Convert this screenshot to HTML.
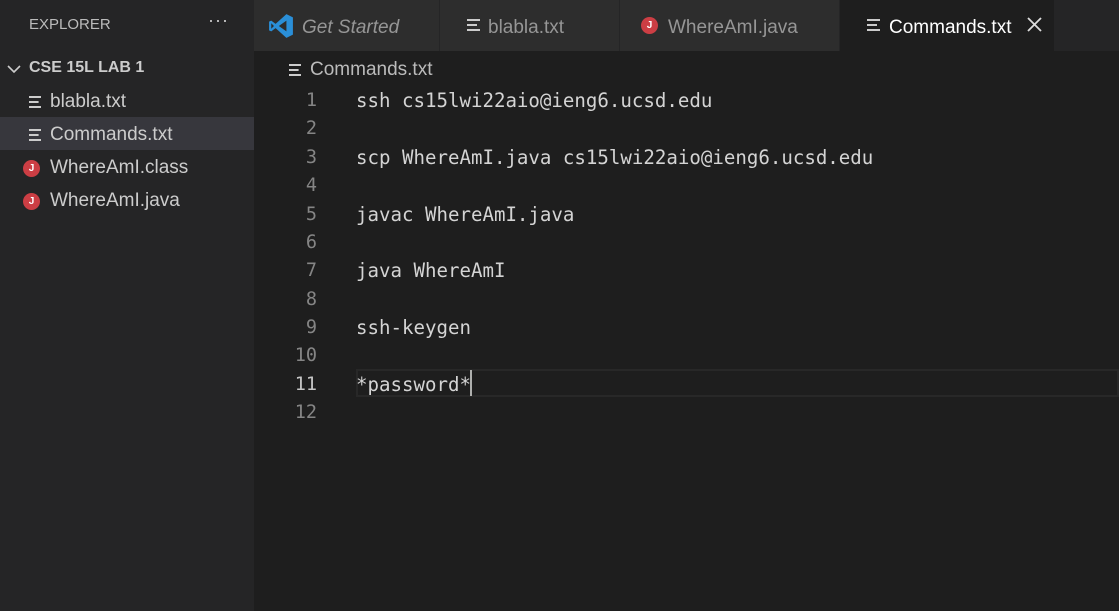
<!DOCTYPE html>
<html><head><meta charset="utf-8"><style>
*{margin:0;padding:0;box-sizing:border-box}
body{width:1119px;height:611px;background:#1e1e1e;overflow:hidden;font-family:"Liberation Sans",sans-serif;position:relative}
.side{position:absolute;left:0;top:0;width:254px;height:611px;background:#252526}
.abs{position:absolute;white-space:nowrap}
.tabbar{position:absolute;left:254px;top:0;width:865px;height:51px;background:#252526}
.tab{position:absolute;top:0;height:51px;background:#2d2d2d;border-right:1px solid #252526;color:#969696;font-size:19px;line-height:51px}
.ln{position:absolute;width:317px;text-align:right;color:#858585;font-family:"DejaVu Sans Mono","Liberation Mono",monospace;font-size:18.5px}
.code{position:absolute;left:356px;color:#d4d4d4;font-family:"DejaVu Sans Mono","Liberation Mono",monospace;font-size:19.1px;white-space:pre}
.jic{display:inline-block;width:17px;height:17px;border-radius:50%;background:#cc3e44;color:#fff;font-size:10px;line-height:17px;text-align:center;font-weight:bold;vertical-align:2px;margin-right:5px}
.txtic{display:inline-block;width:13px;height:12px;vertical-align:middle;margin-right:6px;background:linear-gradient(90deg,#ccc 0 100%) 0 0/100% 2px no-repeat,linear-gradient(90deg,#ccc 0 100%) 0 5px/80% 2px no-repeat,linear-gradient(90deg,#ccc 0 100%) 0 10px/100% 2px no-repeat}
</style></head><body>
<div class="side"></div>
<div class="abs" style="left:29px;top:16px;color:#bbb;font-size:15px">EXPLORER</div>
<div class="abs" style="left:208px;top:10px;color:#ccc;font-size:18px;letter-spacing:1px">···</div>
<svg class="abs" style="left:6px;top:62px" width="16" height="14"><path d="M2 4 L8 10 L14 4" stroke="#ccc" stroke-width="1.6" fill="none"/></svg>
<div class="abs" style="left:29px;top:59px;color:#ccc;font-size:16px;font-weight:bold">CSE 15L LAB 1</div>
<div class="abs" style="left:0;top:117px;width:254px;height:33px;background:#37373d"></div>
<div class="abs" style="left:29px;top:91px;color:#ccc;font-size:19px"><span class="txtic" style="width:12px;margin-right:9px"></span>blabla.txt</div>
<div class="abs" style="left:29px;top:124px;color:#ccc;font-size:19px"><span class="txtic" style="width:12px;margin-right:9px"></span>Commands.txt</div>
<div class="abs" style="left:23px;top:157px;color:#ccc;font-size:19px"><span class="jic" style="margin-right:10px">J</span>WhereAmI.class</div>
<div class="abs" style="left:23px;top:190px;color:#ccc;font-size:19px"><span class="jic" style="margin-right:10px">J</span>WhereAmI.java</div>

<div class="tabbar"></div>
<div class="tab" style="left:254px;width:186px"><svg style="position:absolute;left:14px;top:13px" width="26" height="26" viewBox="0 0 24 24"><path d="M17 1 L23 4 V20 L17 23 L7 14 L3 17 L1 16 V8 L3 7 L7 10 Z M17 7 L10 12 L17 17 Z M3 9.5 V14.5 L5.5 12 Z" fill="#2a8fd8" fill-rule="evenodd"/></svg><span style="position:absolute;left:48px;top:2px;font-style:italic">Get Started</span></div>
<div class="tab" style="left:440px;width:180px"><span class="txtic" style="position:absolute;left:27px;top:19px"></span><span style="position:absolute;left:48px;top:2px">blabla.txt</span></div>
<div class="tab" style="left:620px;width:220px"><span class="jic" style="position:absolute;left:21px;top:17px">J</span><span style="position:absolute;left:48px;top:2px">WhereAmI.java</span></div>
<div class="tab" style="left:840px;width:215px;background:#1e1e1e;color:#fff"><span class="txtic" style="position:absolute;left:27px;top:19px"></span><span style="position:absolute;left:49px;top:2px">Commands.txt</span><svg style="position:absolute;left:187px;top:17px" width="15" height="15"><path d="M1 1 L14 14 M14 1 L1 14" stroke="#ddd" stroke-width="1.8"/></svg></div>

<div class="abs" style="left:289px;top:59px;color:#bbb;font-size:19px"><span class="txtic" style="width:12px;margin-right:9px"></span>Commands.txt</div>

<div class="abs" style="left:356px;top:369px;width:763px;height:28px;border:2px solid #282828"></div>
<div class="ln" style="top:90px">1</div><div class="code" style="top:89px">ssh cs15lwi22aio@ieng6.ucsd.edu</div>
<div class="ln" style="top:118px">2</div>
<div class="ln" style="top:147px">3</div><div class="code" style="top:146px">scp WhereAmI.java cs15lwi22aio@ieng6.ucsd.edu</div>
<div class="ln" style="top:175px">4</div>
<div class="ln" style="top:204px">5</div><div class="code" style="top:203px">javac WhereAmI.java</div>
<div class="ln" style="top:232px">6</div>
<div class="ln" style="top:260px">7</div><div class="code" style="top:259px">java WhereAmI</div>
<div class="ln" style="top:289px">8</div>
<div class="ln" style="top:317px">9</div><div class="code" style="top:316px">ssh-keygen</div>
<div class="ln" style="top:345px">10</div>
<div class="ln" style="top:374px;color:#c6c6c6">11</div><div class="code" style="top:373px">*password*</div>
<div class="abs" style="left:470px;top:370px;width:2px;height:26px;background:#aeafad"></div>
<div class="ln" style="top:402px">12</div>
</body></html>
